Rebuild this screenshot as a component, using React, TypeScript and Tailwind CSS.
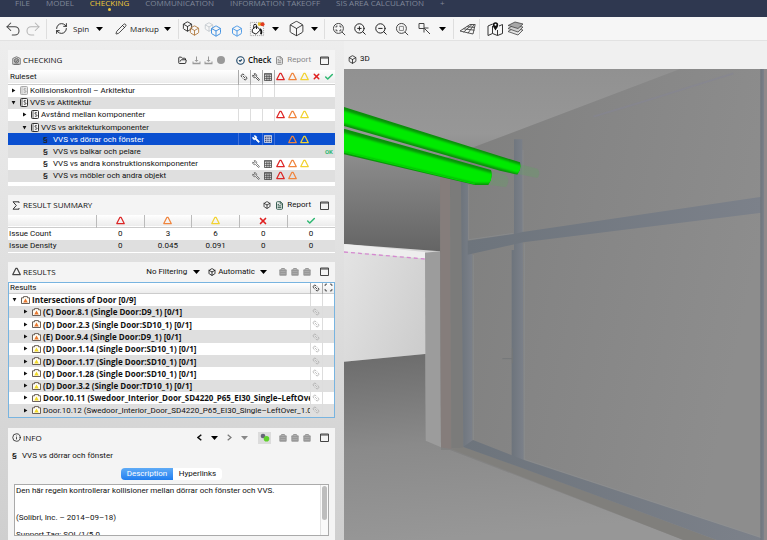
import React from "react";
import clsx from "clsx";
import {
  Box,
  Check,
  CircleCheck,
  FileText,
  FolderOpen,
  Info,
  Link2,
  Pencil,
  RefreshCw,
  Scan,
  Undo2,
  Redo2,
  Wrench,
  X,
  ZoomIn,
  ZoomOut,
} from "lucide-react";

const navItems = ["FILE", "MODEL", "CHECKING", "COMMUNICATION", "INFORMATION TAKEOFF", "SIS AREA CALCULATION", "+"];

const rules = [
  { name: "Kollisionskontroll – Arkitektur", level: 0, open: false, dim: true, marks: "", tools: false, lines: true },
  { name: "VVS vs Aktitektur", level: 0, open: true, marks: "", tools: false, lines: false },
  { name: "Avstånd mellan komponenter", level: 1, open: false, marks: "roy", tools: false, lines: true },
  { name: "VVS vs arkitekturkomponenter", level: 1, open: true, marks: "", tools: false, lines: false },
  { name: "VVS vs dörrar och fönster", level: 2, marks: "oy", tools: true, lines: true, selected: true },
  { name: "VVS vs balkar och pelare", level: 2, marks: "k", tools: false, lines: false },
  { name: "VVS vs andra konstruktionskomponenter", level: 2, marks: "roy", tools: true, lines: false },
  { name: "VVS vs möbler och andra objekt", level: 2, marks: "ro", tools: true, lines: false },
];

const results = [
  { name: "(C) Door.8.1 (Single Door:D9_1) [0/1]", color: "#e8772e" },
  { name: "(D) Door.2.3 (Single Door:SD10_1) [0/1]", color: "#e8772e" },
  { name: "(E) Door.9.4 (Single Door:D9_1) [0/1]", color: "#e8772e" },
  { name: "(D) Door.1.14 (Single Door:SD10_1) [0/1]", color: "#f0d828" },
  { name: "(D) Door.1.17 (Single Door:SD10_1) [0/1]", color: "#f0d828" },
  { name: "(D) Door.1.28 (Single Door:SD10_1) [0/1]", color: "#f0d828" },
  { name: "(D) Door.3.2 (Single Door:TD10_1) [0/1]", color: "#f0d828" },
  { name: "Door.10.11 (Swedoor_Interior_Door_SD4220_P65_EI30_Single–LeftOver", color: "#f0d828" },
  { name: "Door.10.12 (Swedoor_Interior_Door_SD4220_P65_EI30_Single–LeftOver_1.0:", color: "#f0d828", light: true },
];

const RED = "#dc2626";
const ORANGE = "#f0843c";
const YELLOW = "#f2d230";

function Triangle({ color, size = 9 }: { color: string; size?: number }) {
  return (
    <svg width={size} height={size} viewBox="0 0 16 16" className="inline-block shrink-0">
      <path d="M6.8 2.5h2.4L14.6 13.5h-13.2z" fill="none" stroke={color} strokeWidth="2.2" strokeLinejoin="round" />
    </svg>
  );
}

function Caret({ className = "text-black" }: { className?: string }) {
  return (
    <svg width="7" height="4" viewBox="0 0 7 4" className={clsx("shrink-0", className)}>
      <path d="M0 0h7L3.5 4z" fill="currentColor" />
    </svg>
  );
}

function Twisty({ open }: { open?: boolean }) {
  return (
    <svg width="5" height="5" viewBox="0 0 5 5" className="shrink-0">
      <path d={open ? "M0.6 1h3.8L2.5 4.4z" : "M1 0.6v3.8L4.4 2.5z"} fill="#111" />
    </svg>
  );
}

function GridIcon({ light }: { light?: boolean }) {
  return (
    <svg width="8" height="8" viewBox="0 0 9 9" className="mx-auto block">
      <path
        d="M.5 .5h8v8h-8zM.5 2h8M.5 4.2h8M.5 6.4h8M3.2 2v6.5M5.8 2v6.5"
        fill={light ? "#1f2f66" : "none"}
        stroke={light ? "#e5e9f5" : "#3f3f3f"}
        strokeWidth="0.9"
      />
    </svg>
  );
}

function WindowIcon() {
  return (
    <svg width="9" height="9" viewBox="0 0 9 9">
      <path d="M.5 1h8v7.5h-8z" fill="none" stroke="#444" />
      <path d="M.5 2h8" stroke="#444" />
    </svg>
  );
}

function RuleBook({ dim }: { dim?: boolean }) {
  return (
    <svg width="8" height="9" viewBox="0 0 8 9" className="shrink-0">
      <rect x="0.5" y="0.5" width="7" height="8" rx="1" fill={dim ? "#e4e4e4" : "#f4f4f4"} stroke={dim ? "#aaa" : "#333"} />
      <path d="M2 1v7" stroke={dim ? "#bbb" : "#444"} strokeWidth="0.8" />
      <path d="M5.8 2.8c-2-.8-2.6.6-1 1.5 1.7.8 1.5 2.5-.9 1.800" fill="none" stroke={dim ? "#999" : "#222"} strokeWidth="0.9" />
    </svg>
  );
}

function IssueFolder({ color }: { color: string }) {
  return (
    <svg width="9" height="8" viewBox="0 0 9 8" className="shrink-0">
      <path d="M.5 1.8h2V.6h4v1.200h2v5.700h-8z" fill="#fffdf4" stroke="#5a4f48" strokeWidth="0.9" />
      <path d="M4.500 2.400l2.300 4.200h-4.600z" fill={color} />
    </svg>
  );
}

function CaseIcon() {
  return (
    <svg width="8" height="8" viewBox="0 0 8 8">
      <path d="M2.500 1.500V.5h3v1" fill="none" stroke="#999" />
      <rect x="0.3" y="1.300" width="7.400" height="6.400" rx="1" fill="#999" />
      <path d="M1.500 3.500h5M1.500 5.500h5" stroke="#b5b5b5" strokeWidth="0.6" />
    </svg>
  );
}

function CheckingIcon() {
  return (
    <svg width="9" height="9" viewBox="0 0 18 18" fill="none" stroke="#555" strokeWidth="1.500">
      <path d="M1.500 16.500V5L9 1.500 16.500 5v11.500z" fill="#e2e2e2" />
      <circle cx="9" cy="9.500" r="4.500" fill="#aaa" />
      <path d="M6.500 9.500l2 2 3-4M4 16.500h10" />
    </svg>
  );
}

function SigmaIcon() {
  return (
    <svg width="8" height="9" viewBox="0 0 8 9" fill="none" stroke="#333">
      <path d="M7 2V.8H1L4.300 4.500 1 8.200h6V7" />
    </svg>
  );
}

function SaveIcon() {
  return (
    <svg width="9" height="9" viewBox="0 0 9 9" fill="#999">
      <path d="M4 0.500h1v3.500h1.500L4.500 6 2.500 4H4zM0.500 5.500h1v1.200h6V5.500h1v2.700h-8z" />
    </svg>
  );
}

function ExpandButton() {
  return (
    <button aria-label="Maximize panel" className="flex w-[22px] shrink-0 justify-center">
      <WindowIcon />
    </button>
  );
}

function PanelHeader({ icon, title, children }: { icon: React.ReactNode; title: string; children?: React.ReactNode }) {
  return (
    <div className="flex h-5 shrink-0 items-center bg-[#f4f4f4] pl-1">
      <span className="flex w-[11px] shrink-0">{icon}</span>
      <h2 className="flex-1 whitespace-nowrap font-['Open_Sans',sans-serif] leading-3">{title}</h2>
      {children}
      <ExpandButton />
    </div>
  );
}

function ToolButton({ label, width, children }: { label: string; width: string; children: React.ReactNode }) {
  return (
    <button aria-label={label} className={clsx("flex h-6 shrink-0 items-center justify-center", width)}>
      {children}
    </button>
  );
}

function Divider() {
  return <span className="h-5 w-px shrink-0 bg-[#dedede]" />;
}

function ZoomExtents({ square }: { square?: boolean }) {
  return (
    <svg width="14" height="14" viewBox="0 0 24 24" fill="none" stroke="#444" strokeWidth="1.700">
      <circle cx="11" cy="11" r="8.500" />
      <path d="M17.200 17.200L22.500 22.500" />
      {square ? (
        <path d="M7.500 7.500h7v7h-7z" stroke="#888" />
      ) : (
        <path d="M7 9.500V7h2.500M12.500 7H15v2.500M15 12.500V15h-2.500M9.500 15H7v-2.500" />
      )}
    </svg>
  );
}

function Toolbar() {
  return (
    <div role="toolbar" className="flex h-6 shrink-0 items-center border-b border-[#e2e2e2] bg-[#f6f6f6] pl-[3px] text-[#222]">
      <ToolButton label="Undo" width="w-5"><Undo2 size={18} strokeWidth={1.4} color="#444" /></ToolButton>
      <ToolButton label="Redo" width="w-5"><Redo2 size={18} strokeWidth={1.4} color="#b5b5b5" /></ToolButton>
      <span className="w-[3px]" />
      <Divider />
      <button className="ml-2 flex h-6 w-12 shrink-0 items-center font-['Open_Sans',sans-serif]">
        <RefreshCw size={13} strokeWidth={1.7} className="shrink-0" />
        <span className="flex-1 pl-[5px] text-left">Spin</span>
        <Caret />
      </button>
      <button className="ml-3 flex h-6 w-14 shrink-0 items-center font-['Open_Sans',sans-serif]">
        <Pencil size={12} strokeWidth={1.6} className="shrink-0" />
        <span className="flex-1 pl-[3px] text-left">Markup</span>
        <Caret />
      </button>
      <span className="w-[7px]" />
      <Divider />
      <ToolButton label="Show components" width="w-6">
        <Box size={11} strokeWidth={1.9} className="-mt-1 shrink-0" />
        <Box size={11} strokeWidth={1.9} color="#b0783c" className="-ml-1 mt-1 shrink-0" />
      </ToolButton>
      <ToolButton label="Hide components" width="w-5">
        <Box size={10} strokeWidth={1.6} color="#b5bcc2" className="-mt-1 shrink-0" />
        <Box size={12} strokeWidth={1.9} color="#3c8ee0" className="-ml-1 mt-1 shrink-0" />
      </ToolButton>
      <span className="w-1" />
      <ToolButton label="Selected component" width="w-5">
        <Box size={12} strokeWidth={1.9} color="#4a98e6" className="mt-1" />
      </ToolButton>
      <ToolButton label="Colouring" width="w-5">
        <svg width="16" height="16" viewBox="0 0 17 17" fill="none">
          <path d="M1.500 1.500h14v14h-14z" stroke="#999" strokeDasharray="1 1" />
          <path d="M3.500 9l4.500-3.500 4 4-4.500 4.500-4-2z" fill="#fff" stroke="#111" />
          <path d="M5 7.500V5a1.500 1.500 0 013 0V8.500" stroke="#111" />
          <path d="M11.500 8.500c1.800 1 2 3 1.200 5.500" stroke="#111" strokeWidth="2" />
          <circle cx="11.300" cy="3.300" r="2" fill="#e8c02c" />
          <circle cx="14.300" cy="3.500" r="2.200" fill="#e23a1e" />
        </svg>
      </ToolButton>
      <ToolButton label="Colouring options" width="w-4"><Caret /></ToolButton>
      <ToolButton label="View cube" width="w-[27px]"><Box size={17} strokeWidth={1.2} /></ToolButton>
      <ToolButton label="View options" width="w-2"><Caret /></ToolButton>
      <span className="w-1.5" />
      <Divider />
      <span className="w-[3px]" />
      <ToolButton label="Zoom to fit" width="w-[21px]"><ZoomExtents /></ToolButton>
      <ToolButton label="Zoom in" width="w-[21px]"><ZoomIn size={14} strokeWidth={1.7} /></ToolButton>
      <ToolButton label="Zoom out" width="w-[21px]"><ZoomOut size={14} strokeWidth={1.7} /></ToolButton>
      <ToolButton label="Zoom to selection" width="w-[21px]"><ZoomExtents square /></ToolButton>
      <ToolButton label="Select" width="w-6">
        <svg width="13" height="13" viewBox="0 0 13 13" fill="none" stroke="#444">
          <path d="M1 1.500h5v5H1zM12 12L6 6M6 10.500V6h4.500" />
        </svg>
      </ToolButton>
      <ToolButton label="Select options" width="w-3"><Caret /></ToolButton>
      <span className="w-[5px]" />
      <Divider />
      <span className="w-px" />
      <ToolButton label="Grid plane" width="w-6">
        <svg width="17" height="12" viewBox="0 0 17 12" fill="none" stroke="#444" strokeWidth="0.9">
          <path d="M1 8L11 1.500h5.200L14 11zM4.500 9.200L13 1.500M9 10.200L15 1.700M4.500 5.800l11 1.400M7.800 3.600l8 .9" />
        </svg>
      </ToolButton>
      <Divider />
      <span className="w-1" />
      <ToolButton label="Map" width="w-[21px]">
        <svg width="16" height="16" viewBox="0 0 16 16" fill="none" stroke="#333">
          <path d="M6 3.500L5.500 3 1 5v9.500l4.500-2 5 2 5-2V3.500L12 5M5.500 5v7.500M10.500 9v5.500" />
          <path d="M8.500 9.500C7 7 5.800 5.700 5.800 4a2.700 2.700 0 015.400 0c0 1.700-1.200 3-2.700 5.500z" fill="#111" stroke="none" />
          <circle cx="8.500" cy="3.800" r="1" fill="#fff" stroke="none" />
        </svg>
      </ToolButton>
      <ToolButton label="Layers" width="w-[21px]">
        <svg width="17" height="15" viewBox="0 0 17 15" stroke="#444" strokeWidth="0.8" strokeLinejoin="round">
          <path d="M1 10.500l5-3 10 1.500-5 5z" fill="#e4e4e4" />
          <path d="M1 7.500l5-3 10 1.500-5 5z" fill="#d0d0d0" />
          <path d="M1 4.500l7-3.500 8 2-5 4.500z" fill="#a8a8a8" />
        </svg>
      </ToolButton>
    </div>
  );
}

function CheckingPanel() {
  return (
    <section className="bg-white">
      <PanelHeader icon={<CheckingIcon />} title="CHECKING">
        <button aria-label="Open ruleset" className="mr-0.5 flex w-3 justify-center"><FolderOpen size={9} strokeWidth={2.2} /></button>
        <button aria-label="Save ruleset" className="flex w-3 justify-center"><SaveIcon /></button>
        <button aria-label="Save ruleset as" className="flex w-3 justify-center"><SaveIcon /></button>
        <button aria-label="Stop" className="flex w-[13px] justify-center"><span className="size-2 rounded-full bg-[#999]" /></button>
        <button className="ml-2 flex items-center gap-[3px] font-['Open_Sans',sans-serif] font-semibold leading-3">
          <CircleCheck size={9} strokeWidth={3} color="#1d4668" />
          Check
        </button>
        <button className="ml-1 mr-0.5 flex items-center gap-[3px] leading-3 text-[#888]">
          <FileText size={9} strokeWidth={2.5} />
          Report
        </button>
      </PanelHeader>
      <table className="h-[112px] w-full table-fixed border-collapse leading-[11px]">
        <thead>
          <tr className="h-[14px] border-b border-[#ccc] bg-gradient-to-b from-white to-[#ececec]">
            <th className="pl-0.5 text-left font-normal">Ruleset</th>
            <th className="w-3 border-l border-[#aaa]"><Link2 size={8} className="mx-auto rotate-45" /></th>
            <th className="w-3 border-l border-[#aaa]"><Wrench size={8} className="mx-auto -scale-x-100" /></th>
            <th className="w-3 border-l border-[#aaa]"><GridIcon /></th>
            <th className="w-[61px] border-l border-[#aaa]">
              <span className="grid grid-cols-5 place-items-center">
                <Triangle color={RED} />
                <Triangle color={ORANGE} />
                <Triangle color={YELLOW} />
                <X size={9} strokeWidth={4} color="#e02020" />
                <Check size={10} strokeWidth={3.5} color="#2eb872" />
              </span>
            </th>
          </tr>
        </thead>
        <tbody>
          {rules.map((rule) => {
            const cell = clsx(rule.lines && "border-l", rule.selected ? "border-[#3f6fd8]" : "border-[#ddd]");
            return (
              <tr key={rule.name} className={rule.selected ? "bg-[#0a4fd0] text-white" : "odd:bg-white even:bg-[#dfdfdf]"}>
                <td>
                  <span
                    className={clsx(
                      "flex items-center whitespace-nowrap",
                      rule.level === 0 && "pl-[3px]",
                      rule.level === 1 && "pl-[14px]",
                      rule.level === 2 && "pl-[35px]"
                    )}
                  >
                    {rule.level < 2 ? (
                      <>
                        <Twisty open={rule.open} />
                        <span className="w-1" />
                        <RuleBook dim={rule.dim} />
                        <span className="w-0.5" />
                      </>
                    ) : (
                      <span className="w-2.5 font-medium text-[#222]">§</span>
                    )}
                    {rule.name}
                  </span>
                </td>
                <td className={cell} />
                <td className={cell}>
                  {rule.tools && (
                    <Wrench
                      size={8}
                      className="mx-auto -scale-x-100"
                      color={rule.selected ? "#fff" : "#444"}
                      fill={rule.selected ? "#fff" : "none"}
                    />
                  )}
                </td>
                <td className={cell}>{rule.tools && <GridIcon light={rule.selected} />}</td>
                <td className={cell}>
                  <span className="grid grid-cols-5 place-items-center">
                    <span className="flex">{rule.marks.includes("r") && <Triangle color={RED} />}</span>
                    <span className="flex">{rule.marks.includes("o") && <Triangle color={ORANGE} />}</span>
                    <span className="flex">{rule.marks.includes("y") && <Triangle color={YELLOW} />}</span>
                    <span />
                    <span className="text-[6px] font-bold leading-[9px] text-[#2eb872]">{rule.marks === "k" && "OK"}</span>
                  </span>
                </td>
              </tr>
            );
          })}
        </tbody>
      </table>
      <div className="h-1" />
    </section>
  );
}

function SummaryPanel() {
  const rows = [
    ["Issue Count", "0", "3", "6", "0", "0"],
    ["Issue Density", "0", "0.045", "0.091", "0", "0"],
  ];
  const heads = [
    <Triangle color={RED} />,
    <Triangle color={ORANGE} />,
    <Triangle color={YELLOW} />,
    <X size={10} strokeWidth={4} color="#e02020" />,
    <Check size={10} strokeWidth={3.5} color="#2eb872" />,
  ];
  return (
    <section className="mt-[9px] bg-white pb-px">
      <PanelHeader icon={<SigmaIcon />} title="RESULT SUMMARY">
        <button aria-label="Auto update" className="mr-1 flex"><Box size={8} strokeWidth={2.2} /></button>
        <button className="mr-0.5 flex items-center gap-[3px] leading-3">
          <FileText size={9} strokeWidth={2.5} color="#2b5548" />
          Report
        </button>
      </PanelHeader>
      <table className="w-full table-fixed border-collapse leading-3">
        <thead>
          <tr className="h-3 border-b border-[#ccc] bg-gradient-to-b from-white to-[#ececec]">
            <th className="w-[27%]" />
            {heads.map((icon, i) => (
              <th key={i} className="border-l border-[#bbb]">
                <span className="flex justify-center">{icon}</span>
              </th>
            ))}
          </tr>
        </thead>
        <tbody>
          {rows.map((row) => (
            <tr key={row[0]} className="h-3 text-center even:bg-[#dfdfdf]">
              {row.map((value, i) => (
                <td key={i} className="first:pl-px first:text-left">{value}</td>
              ))}
            </tr>
          ))}
        </tbody>
      </table>
    </section>
  );
}

function CaseButtons() {
  return (
    <>
      {["Accept", "Reject", "Pending"].map((label) => (
        <button key={label} aria-label={label} className="flex w-3 shrink-0 justify-center">
          <CaseIcon />
        </button>
      ))}
    </>
  );
}

function ResultsPanel() {
  return (
    <section className="mt-[9px]">
      <PanelHeader icon={<Triangle color="#444" />} title="RESULTS">
        <button className="mr-2 flex items-center gap-1.5 leading-3">
          No Filtering
          <Caret />
        </button>
        <button className="mr-2.5 flex items-center gap-[5px] leading-3">
          <Box size={8} strokeWidth={2.5} className="-mr-[3px]" />
          Automatic
          <Caret />
        </button>
        <CaseButtons />
      </PanelHeader>
      <div className="border border-[#78b4e0] bg-white">
        <table className="h-[134px] w-full table-fixed border-collapse leading-[11px]">
          <thead>
            <tr className="h-[10px] border-b border-[#ccc] bg-gradient-to-b from-white to-[#ececec] leading-[10px]">
              <th className="pl-px text-left font-normal">Results</th>
              <th className="w-3 border-l border-[#aaa]"><Link2 size={8} className="mx-auto rotate-45" /></th>
              <th className="w-3 border-l border-[#aaa]"><Scan size={9} className="mx-auto" /></th>
            </tr>
          </thead>
          <tbody>
            <tr className="font-['Open_Sans',sans-serif] font-bold">
              <td>
                <span className="flex items-center pl-[3px]">
                  <Twisty open />
                  <span className="w-1 shrink-0" />
                  <IssueFolder color="#e8772e" />
                  <span className="ml-0.5">Intersections of Door [0/9]</span>
                </span>
              </td>
              <td className="border-l border-[#ddd]" />
              <td className="border-l border-[#ddd]" />
            </tr>
            {results.map((result) => (
              <tr key={result.name} className={clsx("even:bg-[#dfdfdf]", !result.light && "font-['Open_Sans',sans-serif] font-bold")}>
                <td className="overflow-hidden">
                  <span className="flex items-center whitespace-nowrap pl-[14px]">
                    <Twisty />
                    <span className="w-1 shrink-0" />
                    <IssueFolder color={result.color} />
                    <span className="ml-0.5">{result.name}</span>
                  </span>
                </td>
                <td className="border-l border-[#ddd]"><Link2 size={8} color="#aaa" className="mx-auto rotate-45" /></td>
                <td className="border-l border-[#ddd]" />
              </tr>
            ))}
          </tbody>
        </table>
      </div>
    </section>
  );
}

function InfoPanel() {
  return (
    <section className="mt-2.5 flex min-h-0 flex-1 flex-col bg-[#f4f4f4] pb-1">
      <PanelHeader icon={<Info size={9} strokeWidth={2} />} title="INFO">
        <button aria-label="Previous" className="flex w-[15px] justify-center">
          <svg width="5" height="7" viewBox="0 0 5 7" fill="none" stroke="#111" strokeWidth="1.500"><path d="M4.300 .7L1 3.500l3.300 2.800" /></svg>
        </button>
        <button aria-label="Previous list" className="flex w-[15px] justify-center"><Caret /></button>
        <button aria-label="Next" className="flex w-[15px] justify-center">
          <svg width="5" height="7" viewBox="0 0 5 7" fill="none" stroke="#777" strokeWidth="1.200"><path d="M.7 .7L4 3.500.7 6.300" /></svg>
        </button>
        <button aria-label="Next list" className="flex w-[15px] justify-center"><Caret className="text-[#888]" /></button>
        <button aria-label="Follow selection" className="mx-1.5 flex h-3 w-[13px] items-center justify-center bg-[#dcdcdc]">
          <svg width="10" height="9" viewBox="0 0 10 9">
            <circle cx="3" cy="3" r="2.300" fill="#667" />
            <circle cx="6.500" cy="5.700" r="2.800" fill="#5fd02c" />
          </svg>
        </button>
        <CaseButtons />
      </PanelHeader>
      <p className="flex h-4 shrink-0 items-center pl-1 leading-3">
        <span className="w-2.5 font-medium">§</span>
        VVS vs dörrar och fönster
      </p>
      <div className="mt-1 flex h-3 shrink-0 justify-center leading-3" role="tablist">
        <button role="tab" aria-selected="true" className="w-[52px] rounded-l-sm bg-gradient-to-b from-[#5fabf6] to-[#1f7ef0] text-white">
          Description
        </button>
        <button role="tab" aria-selected="false" className="w-[49px] rounded-r-sm bg-white">
          Hyperlinks
        </button>
      </div>
      <div className="mx-[6px] mt-1 flex min-h-0 flex-1 overflow-hidden border border-[#aaa] bg-white leading-[13px]">
        <div className="-mt-px flex-1 pl-px">
          <p>Den här regeln kontrollerar kollisioner mellan dörrar och fönster och VVS.</p>
          <p className="mt-[14px]">(Solibri, Inc. – 2014–09–18)</p>
          <p className="mt-1">Support Tag: SOL/1/5.0</p>
        </div>
        <div className="w-2 border-l border-[#e2e2e2] bg-[#fafafa] px-px pt-px">
          <div className="h-[34px] rounded-full bg-[#bdbdbd]" />
        </div>
      </div>
    </section>
  );
}

function Scene() {
  return (
    <svg viewBox="12 57 1269 1413" preserveAspectRatio="xMinYMin slice" className="absolute inset-0 size-full">
      <defs>
        <linearGradient id="ceiling" x1="0" y1="0" x2="0" y2="1">
          <stop offset="0" stopColor="#919191" />
          <stop offset="0.35" stopColor="#979797" />
          <stop offset="0.55" stopColor="#868686" />
          <stop offset="1" stopColor="#646464" />
        </linearGradient>
        <linearGradient id="floor" x1="0" y1="0" x2="0.2" y2="1">
          <stop offset="0" stopColor="#6b6b6b" />
          <stop offset="0.5" stopColor="#8a8a8a" />
          <stop offset="1" stopColor="#979797" />
        </linearGradient>
        <linearGradient id="wall" x1="0" y1="0" x2="1" y2="0.3">
          <stop offset="0" stopColor="#7e7e7d" />
          <stop offset="0.45" stopColor="#858585" />
          <stop offset="1" stopColor="#8d8d8d" />
        </linearGradient>
        <linearGradient id="backWall" x1="0" y1="0" x2="1" y2="0.5">
          <stop offset="0" stopColor="#e4e4e4" />
          <stop offset="1" stopColor="#cdcdcd" />
        </linearGradient>
        <linearGradient id="frame" x1="0" y1="0" x2="1" y2="0">
          <stop offset="0" stopColor="#6d747c" />
          <stop offset="1" stopColor="#7c818a" />
        </linearGradient>
        <filter id="sheen" x="-5%" y="-5%" width="110%" height="110%">
          <feGaussianBlur stdDeviation="3" />
        </filter>
        <clipPath id="upperPipe">
          <path d="M12 171L540 337Q546 356 532 374L480 362L12 228z" />
        </clipPath>
        <clipPath id="lowerPipe">
          <path d="M12 236L453 360Q460 383 445 405H405L12 313z" />
        </clipPath>
      </defs>
      <rect x="12" y="57" width="1269" height="550" fill="url(#ceiling)" />
      <path d="M12 935L255 912V1170L1281 1470H12z" fill="url(#floor)" />
      <path d="M12 582L300 604V912H255L12 935z" fill="url(#backWall)" />
      <path d="M12 582L255 606V626L12 604z" fill="#eee" />
      <path d="M12 606L255 627" stroke="#d58ad0" strokeWidth="4" strokeDasharray="12 9" />
      <path d="M255 608L300 604L303 1192L257 1172z" fill="#9c9c9c" />
      <path d="M300 330L400 292L1020 57H1281V1470H1030L330 1200H303z" fill="url(#wall)" />
      <path d="M300 380H330L334 1197L303 1192z" fill="#857d7b" />
      <path d="M330 380H365L370 1194L334 1195z" fill="#7b7b7a" />
      <path d="M760 200L900 158L1180 70" fill="none" stroke="#858592" strokeWidth="5" opacity="0.6" />
      {/* skirting along the floor */}
      <path d="M334 1197L372 1192L550 1255L1130 1470H1030z" fill="#807f7c" />
      {/* window frames */}
      <g fill="url(#frame)">
        <path d="M363 395H384V572L397 612V1190H370z" />
        <path d="M522 268H547L551 1235H515V600H522z" />
        <path d="M383 572L522 552L548 546L1265 440V488L550 577L383 614z" />
        <path d="M370 1190L399 1170L552 1230L1265 1465V1470H1130L548 1255L372 1192z" />
        <path d="M1261 57H1272V1470H1261z" />
      </g>
      <path d="M386 405V569L520 550M400 615V1170M549 300V545M553 580V1228L1262 1462" fill="none" stroke="#8f959b" strokeWidth="2" opacity="0.6" />
      <path d="M1272 57H1281V1470H1272z" fill="#8f898a" />
      <path d="M487 926H516M517 895V940" stroke="#757779" strokeWidth="3" />
      {/* pipe ends seen through the glass */}
      <path d="M538 342L592 356Q604 368 592 384L534 372z" fill="#6a9a6a" opacity="0.45" />
      <path d="M450 362L498 374Q512 392 498 412L445 404z" fill="#6a9a6a" opacity="0.4" />
      {/* pipes */}
      <g clipPath="url(#upperPipe)">
        <path d="M12 165H560V385H12z" fill="#0a8f0a" />
        <path d="M-20 172L552 348V366L532 370L480 355L-20 212z" fill="#02ea02" filter="url(#sheen)" />
      </g>
      <g clipPath="url(#lowerPipe)">
        <path d="M12 230H470V410H12z" fill="#0a8f0a" />
        <path d="M-20 240L470 373V400L405 400L-20 298z" fill="#02ea02" filter="url(#sheen)" />
        <path d="M12 306L405 402" stroke="#02d802" strokeWidth="3" />
      </g>
    </svg>
  );
}

export default function App() {
  return (
    <div className="flex h-screen flex-col overflow-hidden bg-gradient-to-b from-[#f0f0f0] to-[#cfcfcf] font-[Roboto,sans-serif] text-[8px] text-[#111]">
      <header className="h-[17px] shrink-0 bg-[#2f3850]">
        <nav className="flex gap-4 pl-[15px] font-['Open_Sans',sans-serif] leading-[5px]">
          {navItems.map((item) => (
            <a
              key={item}
              href="#"
              className={clsx(
                "flex flex-col items-center gap-[3px] whitespace-nowrap",
                item === "CHECKING" ? "text-[#f0c838]" : "text-[#7f8798]"
              )}
            >
              {item}
              <span className={clsx("size-[3px] rounded-full", item === "CHECKING" && "bg-[#f0c838]")} />
            </a>
          ))}
        </nav>
      </header>
      <Toolbar />
      <main className="grid min-h-0 flex-1 grid-cols-[327px_1fr] gap-x-[9px] pl-2">
        <div className="flex min-h-0 flex-col pt-[9px]">
          <CheckingPanel />
          <SummaryPanel />
          <ResultsPanel />
          <InfoPanel />
        </div>
        <section className="flex flex-col">
          <h2 className="flex h-7 items-center gap-[3px] bg-[#f0f0f0] pl-1 pt-2">
            <Box size={9} strokeWidth={2} />
            3D
          </h2>
          <div className="relative flex-1 overflow-hidden bg-[#858585]">
            <Scene />
          </div>
        </section>
      </main>
    </div>
  );
}
